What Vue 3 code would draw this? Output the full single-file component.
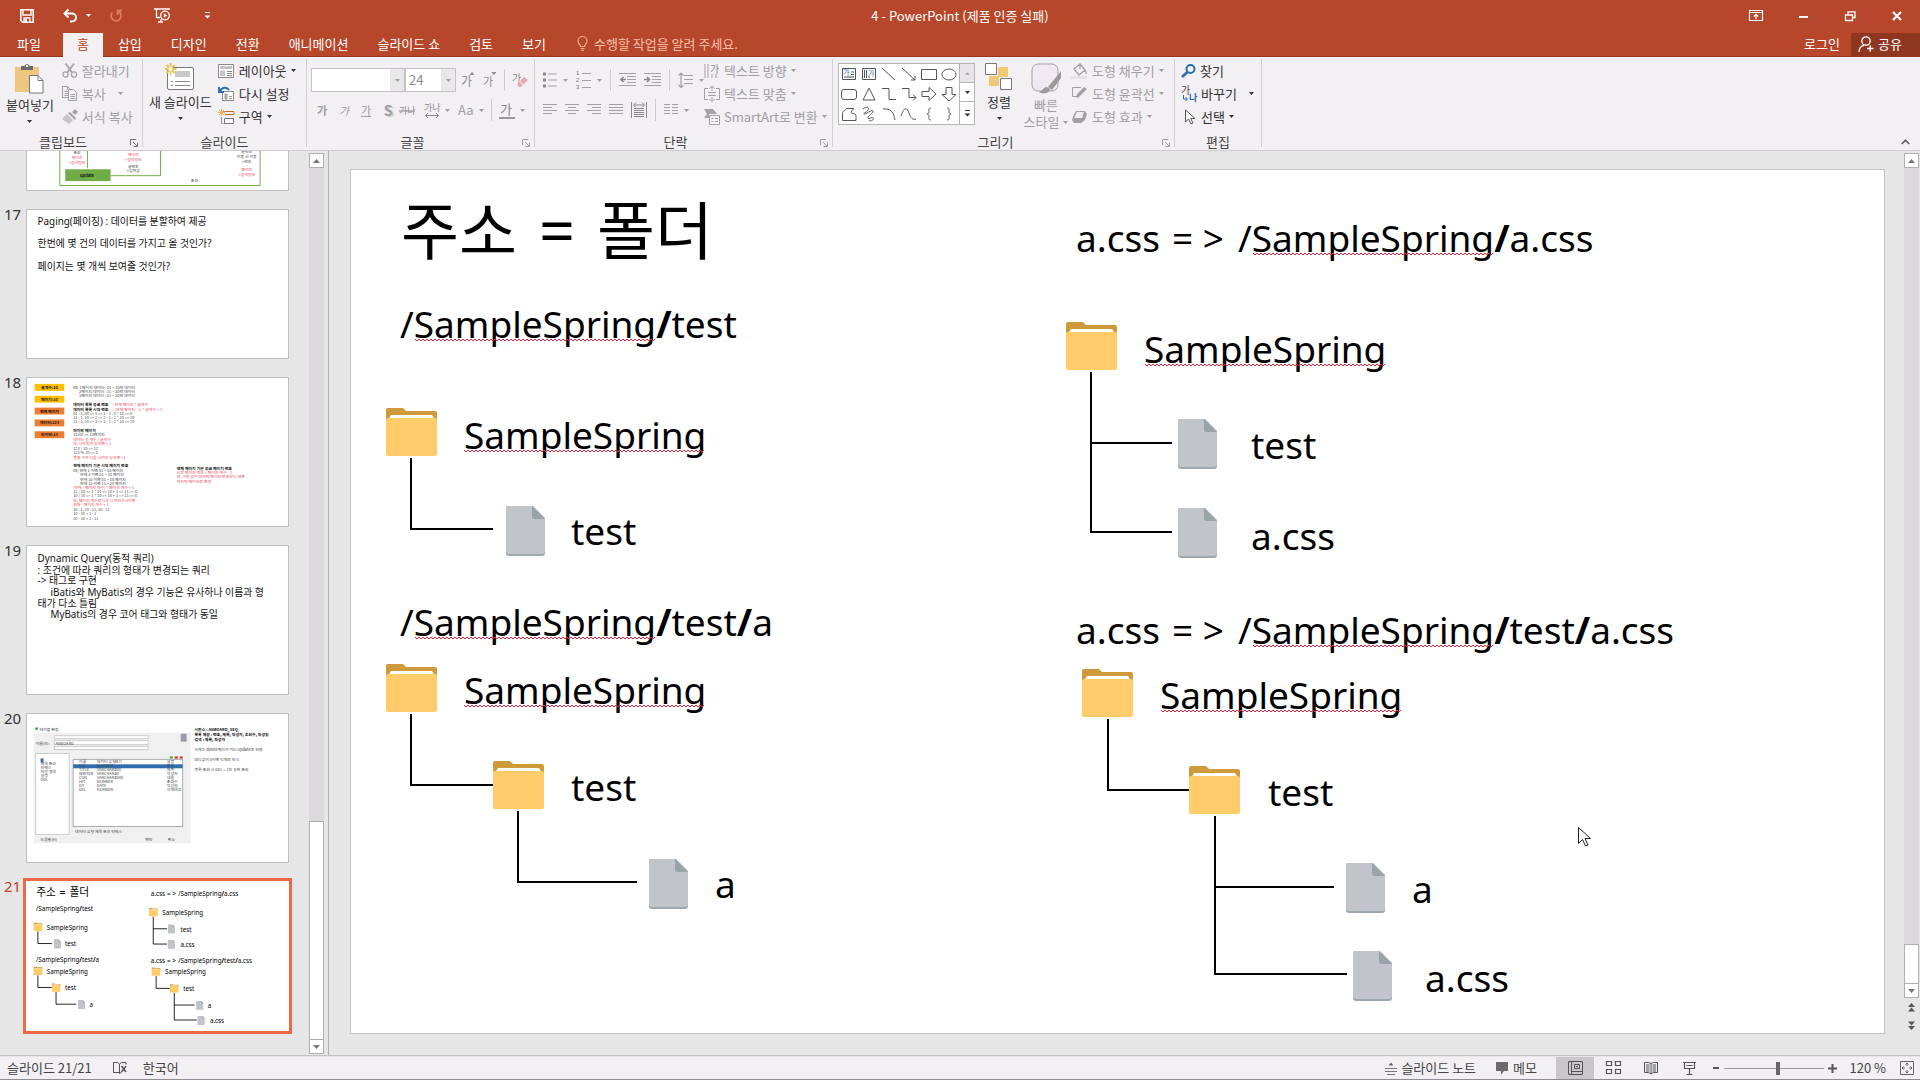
<template>
  <div class="app">
    <header class="top">
      <div class="titlebar">
        <div class="quick">
          <button class="q-btn save" aria-label="저장"><Icon name="save" /></button>
          <button class="q-btn undo" aria-label="실행 취소"><Icon name="undo" /><Icon name="caret" /></button>
          <button class="q-btn redo" aria-label="다시 실행"><Icon name="redo" /></button>
          <button class="q-btn start" aria-label="처음부터 시작"><Icon name="start" /></button>
          <button class="q-btn" aria-label="빠른 실행 도구 모음"><Icon name="more" /></button>
        </div>
        <div class="doc-title">4 - PowerPoint (제품 인증 실패)</div>
        <div class="window-buttons">
          <button aria-label="리본 표시 옵션"><Icon name="ribbonOpt" /></button>
          <button aria-label="최소화"><Icon name="minimize" /></button>
          <button aria-label="이전 크기로"><Icon name="restore" /></button>
          <button aria-label="닫기"><Icon name="close" /></button>
        </div>
      </div>
      <nav class="tabs">
        <button v-for="tab in tabs" :key="tab" class="tab" :class="{ active: tab === activeTab, file: tab === '파일' }" @click="activeTab = tab">{{ tab }}</button>
        <button class="tell-me"><Icon name="bulb" />수행할 작업을 알려 주세요.</button>
        <button class="login">로그인</button>
        <button class="share"><Icon name="person" />공유</button>
      </nav>
    </header>

    <div class="ribbon">
      <!-- 클립보드 -->
      <section class="group clipboard">
        <div class="group-body">
          <button class="big paste"><Icon name="paste" /><span>붙여넣기</span><Icon name="caret" /></button>
          <div class="rows">
            <button class="row off"><Icon name="cut" />잘라내기</button>
            <button class="row off"><Icon name="copy" />복사<Icon name="caret" class="far" /></button>
            <button class="row off"><Icon name="painter" />서식 복사</button>
          </div>
        </div>
        <div class="group-label with-launcher">클립보드<Icon name="launcher" class="launcher" /></div>
      </section>

      <!-- 슬라이드 -->
      <section class="group slides">
        <div class="group-body">
          <button class="big"><Icon name="newSlide" /><span>새 슬라이드</span><Icon name="caret" /></button>
          <div class="rows">
            <button class="row"><Icon name="layout" />레이아웃<Icon name="caret" /></button>
            <button class="row"><Icon name="reset" />다시 설정</button>
            <button class="row"><Icon name="section" />구역<Icon name="caret" /></button>
          </div>
        </div>
        <div class="group-label">슬라이드</div>
      </section>

      <!-- 글꼴 -->
      <section class="group font">
        <div class="group-body stack">
          <div class="tools off">
            <div class="combo name"><input type="text" aria-label="글꼴" /><span class="drop"><Icon name="caret" /></span></div>
            <div class="combo size"><input type="text" aria-label="글꼴 크기" value="24" /><span class="drop"><Icon name="caret" /></span></div>
            <button class="tool grow" aria-label="글꼴 크기 크게"><Icon name="grow" /></button>
            <button class="tool shrink" aria-label="글꼴 크기 작게"><Icon name="shrink" /></button>
            <i class="bar"></i>
            <button class="tool" aria-label="서식 지우기"><Icon name="clear" /></button>
          </div>
          <div class="tools second off">
            <button class="tool fixed bold">가</button>
            <button class="tool fixed italic">가</button>
            <button class="tool fixed under">가</button>
            <button class="tool fixed shadow">S</button>
            <button class="tool" aria-label="취소선"><Icon name="strike" /></button>
            <button class="tool spacing" aria-label="문자 간격"><Icon name="spacing" /><Icon name="caret" /></button>
            <button class="tool case">Aa<Icon name="caret" /></button>
            <i class="bar"></i>
            <button class="tool color" aria-label="글꼴 색"><Icon name="fontColor" /><Icon name="caret" /></button>
          </div>
        </div>
        <div class="group-label with-launcher">글꼴<Icon name="launcher" class="launcher off" /></div>
      </section>

      <!-- 단락 -->
      <section class="group para">
        <div class="group-body">
          <div class="stack">
            <div class="tools off">
              <button class="tool wide" aria-label="글머리 기호"><Icon name="bullets" /><Icon name="caret" /></button>
              <button class="tool wide" aria-label="번호 매기기"><Icon name="numbers" /><Icon name="caret" /></button>
              <i class="bar"></i>
              <button class="tool" aria-label="목록 수준 줄임"><Icon name="outdent" /></button>
              <button class="tool" aria-label="목록 수준 늘림"><Icon name="indent" /></button>
              <i class="bar"></i>
              <button class="tool wide" aria-label="줄 간격"><Icon name="lineSpace" /><Icon name="caret" /></button>
            </div>
            <div class="tools second off">
              <button v-for="a in aligns" :key="a.name" class="tool" :aria-label="a.label"><Icon :name="a.name" /></button>
              <i class="bar"></i>
              <button class="tool wide" aria-label="열"><Icon name="columns" /><Icon name="caret" /></button>
            </div>
          </div>
          <div class="rows">
            <button class="row off"><Icon name="textDir" />텍스트 방향<Icon name="caret" /></button>
            <button class="row off"><Icon name="textFit" />텍스트 맞춤<Icon name="caret" /></button>
            <button class="row off"><Icon name="smartArt" />SmartArt로 변환<Icon name="caret" /></button>
          </div>
        </div>
        <div class="group-label with-launcher">단락<Icon name="launcher" class="launcher off" /></div>
      </section>

      <!-- 그리기 -->
      <section class="group draw">
        <div class="group-body">
          <div class="gallery">
            <div class="shapes">
              <button v-for="(shape, i) in shapes" :key="i" :aria-label="'도형 ' + (i + 1)">
                <svg width="18" height="18" viewBox="0 0 18 18" fill="none" stroke="#555" v-html="shape"></svg>
              </button>
            </div>
            <div class="gallery-nav">
              <button class="dim" aria-label="위로"><Icon name="caretUp" /></button>
              <button aria-label="아래로"><Icon name="caret" /></button>
              <button aria-label="자세히"><Icon name="more" /></button>
            </div>
          </div>
          <button class="big arrange"><Icon name="arrange" /><span>정렬</span><Icon name="caret" /></button>
          <button class="big quick-style off"><Icon name="quickStyle" /><span>빠른</span><span>스타일<Icon name="caret" /></span></button>
          <div class="rows">
            <button class="row off"><Icon name="fill" />도형 채우기<Icon name="caret" /></button>
            <button class="row off"><Icon name="outline" />도형 윤곽선<Icon name="caret" /></button>
            <button class="row off"><Icon name="effect" />도형 효과<Icon name="caret" /></button>
          </div>
        </div>
        <div class="group-label with-launcher">그리기<Icon name="launcher" class="launcher off" /></div>
      </section>

      <!-- 편집 -->
      <section class="group edit">
        <div class="group-body">
          <div class="rows">
            <button class="row"><Icon name="find" />찾기</button>
            <button class="row"><Icon name="replace" />바꾸기<Icon name="caret" class="far" /></button>
            <button class="row"><Icon name="select" />선택<Icon name="caret" /></button>
          </div>
        </div>
        <div class="group-label">편집</div>
      </section>
      <button class="collapse" aria-label="리본 메뉴 축소"><Icon name="chevronUp" /></button>
    </div>

    <main class="workspace">
      <aside class="thumbs">
        <div class="thumb-item">
          <span class="num"></span>
          <svg class="thumb" viewBox="0 0 263 150">
            <g fill="none" stroke="#70ad47" stroke-width="1">
              <path d="M32.500 90V145.500H235.500V90M60.500 90V128M84 135.500H134.500V90" />
            </g>
            <rect x="38" y="129" width="46" height="12" fill="#70ad47" />
            <g class="tiny" text-anchor="middle">
              <text class="bold" x="60" y="137">update</text>
              <text x="50" y="114">조회</text>
              <text x="50" y="119" class="red">페이지</text>
              <text x="50" y="124" class="red">+검색정보</text>
              <text x="107" y="116" class="red">페이지</text>
              <text x="107" y="121" class="red">+검색정보</text>
              <text x="107" y="128">글번호</text>
              <text x="107" y="132">+입력값</text>
              <text x="169" y="142">조회</text>
              <text x="222" y="113">글번호</text>
              <text x="222" y="118">이동 시 이동</text>
              <text x="222" y="123">+번호</text>
              <text x="222" y="131" class="red">페이지</text>
              <text x="222" y="136" class="red">+검색정보</text>
            </g>
          </svg>
        </div>
        <div class="thumb-item">
          <span class="num">17</span>
          <svg class="thumb" viewBox="0 0 263 150">
            <g class="body-text">
              <text x="10" y="15">Paging(페이징) : 데이터를 분할하여 제공</text>
              <text x="10" y="38">한번에 몇 건의 데이터를 가지고 올 것인가?</text>
              <text x="10" y="61">페이지는 몇 개씩 보여줄 것인가?</text>
            </g>
          </svg>
        </div>
        <div class="thumb-item">
          <span class="num">18</span>
          <svg class="thumb" viewBox="0 0 263 150">
            <g v-for="(b, i) in boxes18" :key="b.text">
              <rect x="7" :y="6 + i * 12" width="30" height="7" :fill="b.color" />
              <text class="tiny bold" x="22" :y="11 + i * 12" text-anchor="middle">{{ b.text }}</text>
            </g>
            <text v-for="l in lines18" :key="l.y + l.text" class="tiny" :class="l.kind" :x="l.x || 46" :y="l.y">{{ l.text }}</text>
          </svg>
        </div>
        <div class="thumb-item">
          <span class="num">19</span>
          <svg class="thumb" viewBox="0 0 263 150">
            <g class="body-text">
              <text x="10" y="16">Dynamic Query(동적 쿼리)</text>
              <text x="10" y="28">: 조건에 따라 쿼리의 형태가 변경되는 쿼리</text>
              <text x="10" y="39">-&gt; 태그로 구현</text>
              <text x="23" y="51">iBatis와 MyBatis의 경우 기능은 유사하나 이름과 형</text>
              <text x="10" y="62">태가 다소 틀림</text>
              <text x="23" y="73">MyBatis의 경우 코어 태그와 형태가 동일</text>
            </g>
          </svg>
        </div>
        <div class="thumb-item">
          <span class="num">20</span>
          <svg class="thumb" viewBox="0 0 263 150">
            <rect x="6" y="12" width="159" height="119" fill="#f0f0f0" />
            <rect x="6" y="12" width="159" height="7" fill="#fff" />
            <circle cx="9" cy="15" r="1.500" fill="#3a5" />
            <g fill="#fff" stroke="#ccc" stroke-width="1">
              <rect x="27" y="22" width="95" height="3" />
              <rect x="27" y="27" width="95" height="4" />
              <rect x="27" y="33" width="95" height="3" />
              <rect x="8" y="40" width="34" height="82" />
              <rect x="46" y="46" width="111" height="68" stroke="#aaa" />
            </g>
            <path d="M155 20h6v8h-6z" fill="#99a" />
            <rect x="46" y="51" width="111" height="4" fill="#2f6fae" />
            <rect x="13" y="45" width="3" height="4" fill="#2f6fae" />
            <path d="M149 44h3M154 44h3" stroke="#c22" stroke-width="2" />
            <path d="M144 44h3" stroke="#2a2" stroke-width="2" />
            <g class="tiny">
              <text x="12" y="17">테이블 편집</text>
              <text x="8" y="31">이름(N):</text>
              <text x="28" y="31">ANBOARD</text>
              <text v-for="(t, i) in tree20" :key="t" x="13" :y="52 + i * 4">{{ t }}</text>
              <g v-for="(r, i) in cols20" :key="i">
                <text x="52" :y="50 + i * 4">{{ r[0] }}</text>
                <text x="70" :y="50 + i * 4">{{ r[1] }}</text>
                <text x="88" :y="50 + i * 4">{{ r[2] }}</text>
                <text x="141" :y="50 + i * 4">{{ r[3] }}</text>
              </g>
              <text x="48" y="121">데이터 유형   제약 조건   인덱스</text>
              <text x="13" y="129">도움말(H)</text>
              <text x="119" y="129">확인</text>
              <text x="142" y="129">취소</text>
              <text class="bold" x="169" y="17">시퀀스 : ANBOARD_SEQ</text>
              <text class="bold" x="169" y="22">목록 제공 : 번호, 제목, 작성자, 조회수, 작성일</text>
              <text class="bold" x="169" y="27">검색 : 제목, 작성자</text>
              <text x="169" y="37">삭제는 delete쿼리가 아닌 update로 진행</text>
              <text x="169" y="48">DEL값이 0이면 삭제로 인식</text>
              <text x="169" y="58">목록 조회 시 DEL = 1인 것만 조회</text>
            </g>
          </svg>
        </div>
        <div class="thumb-item current">
          <span class="num">21</span>
          <svg class="thumb" viewBox="-9 -4 1550 873" preserveAspectRatio="none">
            <path class="links heavy" :d="links" />
            <g v-for="(f, i) in folders" :key="'d' + i" :transform="`translate(${f.x} ${f.y})`" v-html="folderArt"></g>
            <g v-for="(f, i) in files" :key="'f' + i" :transform="`translate(${f.x} ${f.y})`" v-html="fileArt"></g>
            <text v-for="(t, i) in labels" :key="'t' + i" class="slide-text" :class="{ head: t.head }" :x="t.x" :y="t.y">
              <tspan v-for="(p, j) in t.parts" :key="j" :class="{ bold: p === '/' && j }">{{ p }}</tspan>
            </text>
          </svg>
        </div>
      </aside>

      <div class="scroll left">
        <button class="scroll-btn" aria-label="위로 스크롤"><Icon name="scrollUp" /></button>
        <div class="track"><div class="handle"></div></div>
        <button class="scroll-btn" aria-label="아래로 스크롤"><Icon name="scrollDown" /></button>
      </div>

      <section class="stage">
        <svg class="slide" viewBox="0 0 1535 865">
          <path class="links" :d="links" />
          <g v-for="(f, i) in folders" :key="'d' + i" :transform="`translate(${f.x} ${f.y})`" v-html="folderArt"></g>
          <g v-for="(f, i) in files" :key="'f' + i" :transform="`translate(${f.x} ${f.y})`" v-html="fileArt"></g>
          <text v-for="(t, i) in labels" :key="'t' + i" class="slide-text" :class="{ head: t.head }" :x="t.x" :y="t.y">
            <tspan v-for="(p, j) in t.parts" :key="j" :class="{ bold: p === '/' && j }">{{ p }}</tspan>
          </text>
          <path class="squiggle" :d="squiggles" />
          <path d="M1228.500 658.500v16l4-4 3 6.500 2.500-1-3-6.500h5.500z" fill="#fff" stroke="#222" />
        </svg>
      </section>

      <div class="scroll right">
        <button class="scroll-btn" aria-label="이전"><Icon name="scrollUp" /></button>
        <div class="track"><div class="handle"></div></div>
        <button class="scroll-btn" aria-label="다음"><Icon name="scrollDown" /></button>
        <button class="jump" aria-label="이전 슬라이드"><Icon name="doubleUp" /></button>
        <button class="jump" aria-label="다음 슬라이드"><Icon name="doubleDown" /></button>
      </div>
    </main>

    <footer class="status">
      <span>슬라이드 21/21</span>
      <button class="spell" aria-label="맞춤법 검사"><Icon name="spell" /></button>
      <button class="lang">한국어</button>
      <button class="notes"><Icon name="notes" />슬라이드 노트</button>
      <button class="memo"><Icon name="memo" />메모</button>
      <button v-for="v in views" :key="v.name" class="view" :class="{ active: v.name === view }" :aria-label="v.label" @click="view = v.name"><Icon :name="v.name" /></button>
      <button class="zoom-btn" aria-label="축소"><Icon name="minus" /></button>
      <input v-model="zoom" class="zoom" type="range" min="0" max="100" aria-label="확대/축소" />
      <button class="zoom-btn" aria-label="확대"><Icon name="plus" /></button>
      <button class="percent">120 %</button>
      <button class="fit" aria-label="창에 맞춤"><Icon name="fit" /></button>
    </footer>
  </div>
</template>

<script setup>
import { ref, h } from 'vue';

const activeTab = ref('홈');
const view = ref('normal');
const zoom = ref(54);

const tabs = ['파일', '홈', '삽입', '디자인', '전환', '애니메이션', '슬라이드 쇼', '검토', '보기'];

const views = [
  { name: 'normal', label: '기본' },
  { name: 'sorter', label: '여러 슬라이드' },
  { name: 'reading', label: '읽기용 보기' },
  { name: 'show', label: '슬라이드 쇼' },
];

const aligns = [
  { name: 'alignLeft', label: '왼쪽 맞춤' },
  { name: 'alignCenter', label: '가운데 맞춤' },
  { name: 'alignRight', label: '오른쪽 맞춤' },
  { name: 'justify', label: '양쪽 맞춤' },
  { name: 'distribute', label: '균등 분할' },
];

const g = '#a3a1a4';
const fontAttr = 'font-family="Noto Sans CJK KR, sans-serif"';

// 아이콘 [너비, 높이, 내용]
const icons = {
  save: [14, 14, '<path d="M.8.8h12.400v12.400H2.500L.8 11.500z" fill="none" stroke="#fff" stroke-width="1.600"/><path d="M3 1v5h8V1M4 13V9h6v4" fill="none" stroke="#fff" stroke-width="1.400"/><path d="M5 10h2v3H5z" fill="#fff"/>'],
  undo: [15, 13, '<path d="M1.500 4.500h7.500a4 4 0 0 1 0 8H7" fill="none" stroke="#fff" stroke-width="2"/><path d="M5.500.5l-4 4 4 4" fill="none" stroke="#fff" stroke-width="2"/>'],
  redo: [14, 13, '<path d="M9.500 2.500a5 5 0 1 1-6 .8M8.500 6V1.500H13" fill="none" stroke="#dd7a62" stroke-width="1.800"/>'],
  start: [17, 15, '<path d="M0 1h16M2.500 1v8.500H6M4 14h5M7 11v3" fill="none" stroke="#fff" stroke-width="1.300"/><circle cx="11" cy="7.500" r="4.300" fill="none" stroke="#fff" stroke-width="1.300"/><path d="M9.800 5.300v4.400l3.400-2.200z" fill="#fff"/>'],
  caret: [5, 3, '<path d="M0 0h5L2.500 3z" fill="currentColor"/>'],
  caretUp: [5, 3, '<path d="M0 3h5L2.500 0z" fill="currentColor"/>'],
  more: [7, 7, '<path d="M1 .5h5" stroke="currentColor"/><path d="M.5 3.500h6L3.500 6.500z" fill="currentColor"/>'],
  ribbonOpt: [14, 11, '<path d="M.5.5h13v10H.5zM.5 2.500h13M7 9V4.500M4.800 6.500L7 4.300l2.200 2.200" fill="none" stroke="#fff" stroke-width="1.200"/>'],
  minimize: [10, 10, '<path d="M0 6h9" stroke="#fff" stroke-width="2"/>'],
  restore: [11, 10, '<path d="M.5 4h7v5.500h-7zM3 3.500V.8h7v5.700H8" fill="none" stroke="#fff" stroke-width="1.300"/>'],
  close: [10, 10, '<path d="M1 1l8 8M9 1L1 9" stroke="#fff" stroke-width="2.200"/>'],
  bulb: [11, 15, '<path d="M3.500 10.500C3.500 8.500 1 8 1 5a4.500 4.500 0 0 1 9 0c0 3-2.500 3.500-2.500 5.500zM3.800 12.500h3.600M4.300 14.300h2.600" fill="none" stroke="#f7a98f" stroke-width="1.200"/>'],
  person: [16, 16, '<circle cx="8" cy="5" r="4.200" fill="none" stroke="#fff" stroke-width="1.300"/><path d="M1 16c0-4 2.500-6 5-6.800M9 12.500h6.500M12.200 9.300v6.500" fill="none" stroke="#fff" stroke-width="1.300"/>'],
  paste: [29, 31, '<path d="M0 4h24v25H0z" fill="#edc77e"/><path d="M6 7V3h3.500a2.600 2.600 0 0 1 5 0H18v4z" fill="#6a6a6a"/><circle cx="12" cy="3" r="1.200" fill="#fff"/><path d="M14.500 12.500H23l5 5v12.500H14.500z" fill="#fff" stroke="#777"/><path d="M23 12.500v5h5" fill="none" stroke="#777"/>'],
  cut: [16, 15, `<path d="M3.500.5l7 9.500M12 .5L5 10" stroke="${g}" stroke-width="1.800"/><circle cx="3.500" cy="11.500" r="2.600" fill="none" stroke="${g}" stroke-width="1.200"/><circle cx="12" cy="11.500" r="2.600" fill="none" stroke="${g}" stroke-width="1.200"/>`],
  copy: [16, 15, `<path d="M.5.5h5l3 3v8h-8zM5.500.5v3h3M2.500 5.500H7M2.500 7.500H7M2.500 9.500H7" fill="none" stroke="${g}"/><path d="M6.500 3.500h5l3 3v8h-8z" fill="#f2f0f3" stroke="${g}"/><path d="M8.500 8.500H13M8.500 10.500H13M8.500 12.500H13" stroke="${g}"/>`],
  painter: [16, 15, `<path d="M10 3l3-3 3 3-3 3zM6 4l2-1 6 6-1 2z" fill="${g}"/><path d="M5 5l6 6-4 4-7-5z" fill="#c7c3c7"/>`],
  launcher: [8, 8, '<path d="M.5 6V.5H6M3 3l4 4M7.500 3.500v4h-4" fill="none" stroke="currentColor"/>'],
  newSlide: [31, 28, '<rect x="2.500" y="4.500" width="26" height="22" rx="1.500" fill="#fff" stroke="#777"/><path d="M10 8h15v6H10z" fill="#c8c8c8"/><path d="M6 18.500h2M10 18.500h15M6 22.500h2M10 22.500h15" stroke="#888"/><path d="M5.500 0v12M0 6h11.500M1.500 2l8 8M9.500 2l-8 8" stroke="#e9c24f" stroke-width="1.800"/><circle cx="5.500" cy="6" r="2" fill="#fff"/>'],
  layout: [17, 14, '<path d="M.5.5h15v13H.5z" fill="#fff" stroke="#888"/><path d="M2 2h12v3H2zM2 6.500h5v5.500H2z" fill="#c4c4c4"/><path d="M9 7.500h5M9 9.500h5M9 11.500h5" stroke="#888"/>'],
  reset: [17, 15, '<path d="M4.500 5.500h11v9h-11z" fill="#fff" stroke="#888"/><path d="M7 8h2v5H7zM11 10.500h3M11 12.500h3" stroke="#999" fill="#bbb"/><path d="M1.500 5.500C4 1 9 .5 11 4M1 1v5h5" fill="none" stroke="#2b6cab" stroke-width="1.900"/>'],
  section: [17, 16, '<path d="M7 2.500h9M7 5.500h9v-3" fill="none" stroke="#c96a1a"/><path d="M6.500 9.500h9v5h-9z" fill="#fff" stroke="#777"/><path d="M3.500 8v6.500h2M5 2.500h2" fill="none" stroke="#999"/><path d="M3.500 0v7M0 3.500h7M1 1l5 5M6 1L1 6" stroke="#e8b95c"/>'],
  grow: [14, 16, `<text x="0" y="14" font-size="12" ${fontAttr} fill="#8c8a8d">가</text><path d="M8.500 3h5L11 0z" fill="#8c8a8d"/>`],
  shrink: [14, 16, `<text x="0" y="14" font-size="11" ${fontAttr} fill="#8c8a8d">가</text><path d="M8.500 0h5L11 3z" fill="#8c8a8d"/>`],
  clear: [17, 16, `<text x="0" y="10" font-size="10" ${fontAttr} fill="#8c8a8d">가</text><path d="M5 12l7-7 4 3-7 7H7z" fill="#e8a9b4"/><path d="M7.500 9.500l4 3.500" stroke="#fff"/>`],
  strike: [17, 12, `<text x="0" y="10" font-size="9" ${fontAttr} fill="#8c8a8d">가나</text><path d="M0 7h16" stroke="#8c8a8d"/>`],
  spacing: [17, 18, `<text x="0" y="10" font-size="9" ${fontAttr} fill="#8c8a8d">가나</text><path d="M1 14.500h14M4 12l-2.500 2.500L4 17M12 12l2.500 2.500L12 17" fill="none" stroke="#8c8a8d"/>`],
  fontColor: [16, 17, `<text x="1" y="12" font-size="13" ${fontAttr} fill="#8c8a8d">가</text><path d="M0 16h16" stroke="#9a979b" stroke-width="2"/>`],
  bullets: [14, 16, `<path d="M5 2h9M5 8h9M5 14h9" stroke="${g}"/><path d="M0 .5h3v3H0zM0 6.500h3v3H0zM0 12.500h3v3H0z" fill="#8a888b"/>`],
  numbers: [15, 20, `<path d="M6 3.500h9M6 10.500h9M6 17.500h9" stroke="${g}"/><g font-size="6" font-family="Liberation Sans, sans-serif" fill="#777"><text x="0" y="5">1</text><text x="0" y="12">2</text><text x="0" y="19">3</text></g>`],
  outdent: [17, 14, `<path d="M0 .5h17M8 3.500h9M8 6.500h9M8 9.500h9M0 12.500h17" stroke="${g}"/><path d="M7 6.500H2M4.500 4L2 6.500 4.500 9" fill="none" stroke="#8a888b" stroke-width="1.700"/>`],
  indent: [17, 14, `<path d="M0 .5h17M8 3.500h9M8 6.500h9M8 9.500h9M0 12.500h17" stroke="${g}"/><path d="M0 6.500h5.500M3 4l2.500 2.500L3 9" fill="none" stroke="#8a888b" stroke-width="1.700"/>`],
  lineSpace: [15, 17, `<path d="M6 3.500h9M6 7.500h9M6 11.500h9M3 1v14M.5 3.500L3 1l2.500 2.500M.5 13L3 15.500 5.500 13" fill="none" stroke="${g}" stroke-width="1.200"/>`],
  alignLeft: [14, 12, `<path d="M0 .5h14M0 3.500h9M0 6.500h14M0 9.500h9" stroke="${g}"/>`],
  alignCenter: [14, 12, `<path d="M0 .5h14M3 3.500h8M0 6.500h14M3 9.500h8" stroke="${g}"/>`],
  alignRight: [14, 12, `<path d="M0 .5h14M5 3.500h9M0 6.500h14M5 9.500h9" stroke="${g}"/>`],
  justify: [14, 12, `<path d="M0 .5h14M0 3.500h14M0 6.500h14M0 9.500h14" stroke="${g}"/>`],
  distribute: [16, 16, '<path d="M.5 0v16M15.500 0v16M3 6.500h10M3 8.500h10M3 10.500h10M3 12.500h10M3 14.500h10M3 3h10M5 .5L2.500 3 5 5.500M11 .5L13.500 3 11 5.500" fill="none" stroke="#8a888b"/>'],
  columns: [14, 12, `<path d="M0 .5h6M0 3.500h6M0 6.500h6M0 9.500h6M8 .5h6M8 3.500h6M8 6.500h6M8 9.500h6" stroke="${g}"/>`],
  textDir: [16, 16, `<path d="M1 1v14M4 1v14M8 11v4M12 11v4" stroke="${g}"/><text x="6" y="10" font-size="10" ${fontAttr} fill="#8a888b">가</text>`],
  textFit: [16, 16, `<path d="M4 2.500H.5v11H4M12 2.500h3.500v11H12M4 6.500h8M4 9.500h8M8 5V0M5.500 2.500L8 0l2.500 2.500M8 11v4.500M5.500 13L8 15.500l2.500-2.500" fill="none" stroke="${g}"/>`],
  smartArt: [16, 16, `<path d="M0 0h9l4 5H5v4H0l3-4z" fill="${g}"/><path d="M5.500 6.500h10v9h-10z" fill="#f7f5f7" stroke="${g}"/><path d="M7.500 9.500h2M11 9.500h3M7.500 12.500h2M11 12.500h3" stroke="${g}"/>`],
  arrange: [28, 28, '<path d="M13 4h10v10H13zM4 13h10v10H4z" fill="#f0c878"/><path d="M.5.5h11v11H.5zM15.500 15.500h11v11h-11z" fill="#fff" stroke="#777"/>'],
  quickStyle: [31, 31, `<rect x="1" y="1" width="26" height="27" rx="6" fill="#efeaf1" stroke="${g}"/><path d="M30 8L17 24l4 3 9-12zM16 24c-4 0-4 4-8 5 4 3 11 1 11-3z" fill="#9c999d"/>`],
  fill: [17, 16, `<path d="M3 6l6-5 5 6-6 5zM9 1v5M14 7l1.500 4" fill="none" stroke="${g}" stroke-width="1.300"/><path d="M0 13h16v3H0z" fill="#e8e2e8"/>`],
  outline: [17, 15, `<path d="M10 1.500H1.500v9H6" fill="none" stroke="${g}"/><path d="M5 12l1-4 7-7 3 2-8 8z" fill="${g}"/>`],
  effect: [17, 14, `<path d="M5 1h9l2 3-2 6-4 3H3L1 10l2-6z" fill="${g}"/><path d="M5.500 1.500h8l-2 7h-9z" fill="#eee" stroke="${g}"/>`],
  find: [15, 14, '<circle cx="9.500" cy="5" r="4" fill="none" stroke="#2b6cab" stroke-width="2"/><path d="M6.500 8L1 13" stroke="#2b6cab" stroke-width="2.600"/>'],
  replace: [16, 17, `<text x="0" y="9" font-size="10" ${fontAttr} fill="#444">가</text><text x="8" y="16" font-size="9" font-weight="700" ${fontAttr} fill="#2b6cab">나</text><path d="M2.500 10v4H6M4.500 12L6.500 14l-2 2" fill="none" stroke="#2b6cab"/>`],
  select: [16, 16, '<path d="M4.500 1v12l3-3 2.500 5 2-1-2.300-4.500H14z" fill="#fff" stroke="#555"/>'],
  chevronUp: [9, 6, '<path d="M.7 5L4.500 1.300 8.300 5" fill="none" stroke="#666" stroke-width="1.700"/>'],
  scrollUp: [7, 4, '<path d="M0 4h7L3.500 0z" fill="#777"/>'],
  scrollDown: [7, 4, '<path d="M0 0h7L3.500 4z" fill="#777"/>'],
  doubleUp: [7, 9, '<path d="M0 4h7L3.500 0zM0 8.500h7L3.500 4.500z" fill="#555"/>'],
  doubleDown: [7, 9, '<path d="M0 .5h7L3.500 4.500zM0 5h7L3.500 9z" fill="#555"/>'],
  spell: [16, 14, '<path d="M7.500 11.500H1.500V1.500h4l2 1.500v9.500l2-1M7.500 3l2-1.500h4.500v2" fill="none" stroke="#555"/><path d="M9.500 5l4.500 6M14 5l-4.500 6" stroke="#555" stroke-width="1.500"/>'],
  notes: [12, 13, '<path d="M3.500 3.500h5L6 .5z" fill="#666"/><path d="M0 6.500h12M0 9.500h12M2 12.500h8" stroke="#777"/>'],
  memo: [12, 13, '<path d="M0 0h12v9H8l-3 4V9H0z" fill="#6b696c"/>'],
  normal: [15, 14, '<path d="M.5.5h14v13H.5zM3.500.5v13M3.500 10.500h11M6.500 3.500h5v4h-5z" fill="none" stroke="#555"/><path d="M8 5.500h2" stroke="#555"/>'],
  sorter: [15, 14, '<path d="M.5.500h5v4h-5zM9.500.500h5v4h-5zM.5 8.500h5v4h-5zM9.500 8.500h5v4h-5z" fill="none" stroke="#555" stroke-width="1.200"/>'],
  reading: [14, 14, '<path d="M.5 1.500h4l2.500 1 2.500-1h4v10h-4l-2.500 1.500-2.500-1.500h-4zM7 2.500V13M2 4h3.500M2 6h3.500M2 8h3.500M2 10h3.500M8.500 4H12M8.500 6H12M8.500 8H12M8.500 10H12" fill="none" stroke="#555"/>'],
  show: [13, 13, '<path d="M0 .5h13M1.500.5v6h10v-6M3.500 3.500h6M6.500 7v5M3.500 12.500h6" fill="none" stroke="#555" stroke-width="1.200"/>'],
  minus: [8, 8, '<path d="M1 4h6" stroke="#555" stroke-width="2"/>'],
  plus: [9, 9, '<path d="M0 4.500h9M4.500 0v9" stroke="#555" stroke-width="2"/>'],
  fit: [14, 14, '<path d="M.5.5h13v13H.5zM7 2v3M5.500 3.500L7 2l1.500 1.500M7 12V9M5.500 10.500L7 12l1.500-1.500M2 7h3M3.500 5.500L2 7l1.500 1.500M12 7H9M10.500 5.500L12 7l-1.500 1.500" fill="none" stroke="#666"/>'],
};

const Icon = ({ name }) => {
  const [width, height, body] = icons[name];
  return h('svg', { width, height, viewBox: `0 0 ${width} ${height}`, overflow: 'visible', innerHTML: body });
};
Icon.props = ['name'];

// 도형 갤러리 (6 x 3)
const shapes = [
  `<path d="M2.500 3.500h13v11h-13zM11 7h3M11 9.500h3M4 12h10"/><text x="3" y="10" font-size="7" ${fontAttr} fill="#2b6cab" stroke="none">가</text>`,
  `<path d="M2.500 3.500h13v11h-13zM4.500 5v8M6.500 5v8M9 11v2"/><text x="8" y="11" font-size="7" ${fontAttr} fill="#2b6cab" stroke="none">가</text>`,
  '<path d="M2 3l13 12"/>',
  '<path d="M2 3l13 12M15 11v4h-4"/>',
  '<path d="M1.500 4.500h15v10h-15z"/>',
  '<ellipse cx="9" cy="9.500" rx="7" ry="5.500"/>',
  '<rect x="1.500" y="4.500" width="15" height="10" rx="2.500"/>',
  '<path d="M9 3l6 12H3z"/>',
  '<path d="M2 3.500h7v11h7"/>',
  '<path d="M2 3.500h7v9h7M13 9.500l3 3-3 3"/>',
  '<path d="M2 6.500h7v-4l7 6.500-7 6.500v-4H2z"/>',
  '<path d="M6 2.500h6v7h4L9 16 2 9.500h4z"/>',
  '<path d="M6.500 3.500h7.500c-4 3-3 5-1 5 2 0 3 1 3 3v4H2.500V9c0-4 3-3 4-5.500z"/>',
  '<path d="M3 4c3-3 7-2 5 1s-5 3-4 4 8-5 9-3-6 5-5 7 4-2 5 0-2 4-4 2"/>',
  '<path d="M3 4c8-1 11 4 12 11"/>',
  '<path d="M1 11C4 2 7 2 9 8s4 7 7 6"/>',
  '<path d="M11 3c-3 0-2 2-2 4 0 1-1 2-2 2 1 0 2 1 2 2 0 2-1 4 2 4"/>',
  '<path d="M7 3c3 0 2 2 2 4 0 1 1 2 2 2-1 0-2 1-2 2 0 2 1 4-2 4"/>',
];

const boxes18 = [
  { text: '글개수:10', color: '#ffc000' },
  { text: '페이지:10', color: '#ffc000' },
  { text: '현재 페이지', color: '#ed7d31' },
  { text: '데이터:123', color: '#ed7d31' },
  { text: '마지막:13', color: '#ed7d31' },
];

const lines18 = [
  { y: 11, text: 'ex) 1페이지 데이터 : 01 ~ 10번 데이터' },
  { y: 15, x: 52, text: '2페이지 데이터 : 11 ~ 20번 데이터' },
  { y: 19, x: 52, text: '3페이지 데이터 : 21 ~ 30번 데이터' },
  { y: 28, kind: 'bold', text: '데이터 목록 종료 번호' },
  { y: 28, x: 86, kind: 'red', text: ': 현재 페이지 * 글개수' },
  { y: 33, kind: 'bold', text: '데이터 목록 시작 번호' },
  { y: 33, x: 86, kind: 'red', text: ': (현재 페이지 - 1) * 글개수 + 1' },
  { y: 37, text: '01 : 1, 00 => 1 => 1 - 1 : 0 * 10 => 0' },
  { y: 42, text: '11 : 1, 10 => 2 => 2 - 1 : 1 * 10 => 10' },
  { y: 46, text: '21 : 1, 20 => 3 => 3 - 1 : 2 * 10 => 20' },
  { y: 55, kind: 'bold', text: '마지막 페이지' },
  { y: 59, text: '123건 => 13페이지' },
  { y: 64, kind: 'red', text: '데이터 총 개수 / 글개수' },
  { y: 68, kind: 'red', text: '단, 나머지가 있으면 + 1' },
  { y: 73, text: '123 / 10 => 12' },
  { y: 77, text: '123 % 10 => 3' },
  { y: 82, kind: 'red', text: '몫을 구한 다음 나머지 있으면 +1' },
  { y: 90, kind: 'bold', text: '현재 페이지 기준 시작 페이지 번호' },
  { y: 95, text: 'ex) 현재 1 이면 01 ~ 10 페이지' },
  { y: 99, x: 53, text: '현재 2 이면 01 ~ 10 페이지' },
  { y: 104, x: 53, text: '현재 10 이면 01 ~ 10 페이지' },
  { y: 108, x: 53, text: '현재 12 이면 11 ~ 20 페이지' },
  { y: 113, kind: 'red', text: '(현재 / 페이지 개수) * 페이지 개수 + 1' },
  { y: 117, text: '12 / 10 => 1 * 10 => 10 + 1 => 11 => O' },
  { y: 121, text: '10 / 10 => 1 * 10 => 10 + 1 => 11 => X' },
  { y: 126, kind: 'red', text: '단, 페이지 개수로 나눈 나머지가 0이면' },
  { y: 130, kind: 'red', text: '현재 - 페이지 개수 + 1' },
  { y: 135, text: '10 : 1, 20 : 11, 30 : 21' },
  { y: 139, text: '10 - 10 + 1 : 1' },
  { y: 144, text: '20 - 10 + 1 : 11' },
  { y: 93, x: 151, kind: 'bold', text: '현재 페이지 기준 종료 페이지 번호' },
  { y: 97, x: 151, kind: 'red', text: '시작 페이지 번호 + 페이지 개수 - 1' },
  { y: 101, x: 151, kind: 'red', text: '단, 구한 값이 마지막 페이지 번호보다 크면' },
  { y: 106, x: 151, kind: 'red', text: '마지막 페이지로 변경' },
];

const tree20 = ['제약 조건', '인덱스', '저장 영역', '설명', 'DDL'];

const cols20 = [
  ['이름', '데이터 유형', '크기', '설명'],
  ['NO', 'NUMBER', '', '번호'],
  ['TITLE', 'VARCHAR2', '300', '제목'],
  ['WRITER', 'VARCHAR2', '30', '작성자'],
  ['CON', 'VARCHAR2', '3000', '내용'],
  ['HIT', 'NUMBER', '', '조회수'],
  ['DT', 'DATE', '', '작성일'],
  ['DEL', 'NUMBER', '', '삭제여부'],
];

// 21번 슬라이드
const labels = [
  { x: 51, y: 85, head: true, parts: ['주소'] },
  { x: 189, y: 85, head: true, parts: ['='] },
  { x: 247, y: 85, head: true, parts: ['폴더'] },
  { x: 50, y: 169, parts: ['/', 'SampleSpring', '/', 'test'] },
  { x: 114, y: 280, parts: ['SampleSpring'] },
  { x: 221, y: 376, parts: ['test'] },
  { x: 50, y: 467, parts: ['/', 'SampleSpring', '/', 'test', '/', 'a'] },
  { x: 114, y: 535, parts: ['SampleSpring'] },
  { x: 221, y: 632, parts: ['test'] },
  { x: 365, y: 729, parts: ['a'] },
  { x: 726, y: 83, parts: ['a.css'] },
  { x: 822, y: 83, parts: ['= >'] },
  { x: 888, y: 83, parts: ['/', 'SampleSpring', '/', 'a.css'] },
  { x: 794, y: 194, parts: ['SampleSpring'] },
  { x: 901, y: 290, parts: ['test'] },
  { x: 901, y: 381, parts: ['a.css'] },
  { x: 726, y: 475, parts: ['a.css'] },
  { x: 822, y: 475, parts: ['= >'] },
  { x: 888, y: 475, parts: ['/', 'SampleSpring', '/', 'test', '/', 'a.css'] },
  { x: 810, y: 540, parts: ['SampleSpring'] },
  { x: 918, y: 637, parts: ['test'] },
  { x: 1062, y: 734, parts: ['a'] },
  { x: 1075, y: 823, parts: ['a.css'] },
];

const folders = [
  { x: 36, y: 239 }, { x: 36, y: 495 }, { x: 143, y: 592 },
  { x: 716, y: 153 }, { x: 732, y: 500 }, { x: 839, y: 597 },
];

const files = [
  { x: 156, y: 337 }, { x: 299, y: 690 }, { x: 828, y: 250 },
  { x: 828, y: 339 }, { x: 996, y: 694 }, { x: 1003, y: 782 },
];

const links = 'M61 289v71h82M61 545v71h82M168 642v71h119M741 203v160h81M741 274h81M758 550v71h81M865 647v158h132M865 718h119';

const folderArt = '<path d="M0 14V2q0-2 2-2h15l3 3h29q2 0 2 2v10z" fill="#cf9b3a"/><path d="M2 12l3-5h41l3 5z" fill="#fff"/><path d="M0 11q1-1 2-1h47q2 0 2 2v34q0 2-2 2H2q-2 0-2-2z" fill="#ffcc69"/>';
const fileArt = '<path d="M0 2q0-2 2-2h25l12 12v35q0 3-3 3H3q-3 0-3-3z" fill="#9ca7ae"/><path d="M0 2q0-2 2-2h24l13 13v32q0 3-3 3H3q-3 0-3-3z" fill="#c1c4c9"/><path d="M26 0l13 13H28q-2 0-2-2z" fill="#9aa3a8"/>';

// 맞춤법 물결선
const wave = (x, y) => {
  let d = `M${x} ${y}`;
  for (let i = 0; i < 60; i++) d += 'l2 2l2 -2';
  return d;
};
const squiggles = [
  [65, 170], [114, 281], [65, 468], [114, 536],
  [903, 84], [795, 195], [903, 476], [811, 541],
].map(([x, y]) => wave(x, y)).join('');
</script>

<style>
body {
  margin: 0;
}
</style>

<style scoped>
.app {
  display: flex;
  flex-direction: column;
  height: 100vh;
  overflow: hidden;
  background: #e6e6e6;
  color: #333;
  font: 13px/16px "Noto Sans CJK KR", sans-serif;
}

button {
  display: flex;
  align-items: center;
  padding: 0;
  border: none;
  background: none;
  color: inherit;
  font: inherit;
  white-space: nowrap;
}

svg {
  flex: none;
}

/* 제목 표시줄 */
.top {
  background: #b7472a;
  color: #fff;
  border-bottom: 1px solid #93361f;
}

.titlebar {
  display: grid;
  grid-template-columns: 1fr auto 1fr;
  align-items: center;
  height: 31px;
  padding-bottom: 2px;
}

.quick {
  display: flex;
  align-items: center;
  padding-left: 20px;
}

.q-btn.save {
  margin-right: 29px;
}

.q-btn.undo {
  gap: 8px;
  margin-right: 18px;
}

.q-btn.redo {
  margin-right: 31px;
}

.q-btn.start {
  margin-right: 33px;
}

.window-buttons {
  display: flex;
  justify-content: flex-end;
  gap: 36px;
  padding-right: 18px;
}

.tabs {
  display: flex;
  height: 23px;
  gap: 1px;
  padding-left: 3px;
}

.tab {
  padding: 0 14px 2px;
}

.tab.file {
  padding-right: 21px;
}

.tab.active {
  height: 24px;
  background: #f2f0f3;
  color: #b7472a;
}

.tell-me {
  gap: 6px;
  margin-left: 16px;
  padding-bottom: 2px;
  color: #f7bda9;
}

.login {
  margin-left: auto;
  padding: 0 10px 2px;
}

.share {
  gap: 4px;
  width: 69px;
  padding: 0 0 2px 7px;
  background: #8f3621;
}

/* 리본 */
.ribbon {
  display: flex;
  height: 93px;
  background: #f2f0f3;
  border-bottom: 1px solid #cdcbce;
}

.group {
  display: flex;
  flex-direction: column;
  box-sizing: border-box;
  flex: none;
  margin: 2px 0 3px;
  border-right: 1px solid #d2d0d3;
}

.group-body {
  display: flex;
  flex: none;
  height: 76px;
}

.group-label {
  position: relative;
  line-height: 14px;
  text-align: center;
  color: #444;
}

.group-label.with-launcher {
  padding-right: 16px;
}

.launcher {
  position: absolute;
  right: 4px;
  top: 4px;
  color: #777;
}

.off,
.launcher.off {
  color: #a19ea2;
}

.big {
  flex-direction: column;
  gap: 1px;
  padding-top: 4px;
  color: #333;
}

.big > svg:first-child {
  margin-bottom: 2px;
}

.big > svg:last-child {
  margin-top: 6px;
}

.big.off {
  color: #a19ea2;
}

.rows {
  display: flex;
  flex-direction: column;
}

.row {
  height: 23px;
  gap: 4px;
}

.row .far {
  margin-left: 8px;
}

.clipboard {
  width: 143px;
}

.clipboard .group-body {
  gap: 8px;
  padding-left: 6px;
}

.slides {
  width: 164px;
}

.slides .group-body {
  gap: 6px;
  padding-left: 6px;
}

.font {
  width: 228px;
}

.stack {
  display: flex;
  flex-direction: column;
}

.font .stack {
  padding-left: 4px;
}

.tools {
  display: flex;
  align-items: center;
  height: 24px;
  margin-top: 9px;
}

.tools.second {
  margin-top: 6px;
}

.bar {
  width: 1px;
  height: 22px;
  margin: 0 7px;
  background: #cfcdd0;
}

.combo {
  display: flex;
  box-sizing: border-box;
  height: 24px;
  border: 1px solid #c3c1c4;
  background: #fff;
}

.combo.name {
  width: 94px;
}

.combo.size {
  width: 51px;
}

.combo input {
  flex: 1;
  min-width: 0;
  padding: 0 3px;
  border: none;
  background: none;
  color: #8c8a8d;
  font: inherit;
}

.drop {
  display: flex;
  align-items: center;
  justify-content: center;
  width: 14px;
  background: #e9e7ea;
}

.tool.grow {
  margin: 0 8px 0 5px;
}

.tool.fixed {
  justify-content: center;
  width: 22px;
  font-size: 11px;
}

.tool.bold {
  font-weight: 700;
}

.tool.italic {
  font-style: italic;
}

.tool.under {
  text-decoration: underline;
}

.tool.fixed.shadow {
  font-size: 14px;
  font-weight: 700;
  text-shadow: 2px 1px 1px #ccc;
}

.tool.spacing {
  gap: 4px;
  margin: 0 8px;
}

.tool.case {
  gap: 5px;
}

.tool.color {
  gap: 5px;
}

.para {
  width: 298px;
}

.para .stack {
  width: 161px;
  padding-left: 8px;
}

.para .tools {
  gap: 8px;
}

.para .tools .bar {
  margin: 0;
}

.para .tool.wide {
  gap: 6px;
}

.draw {
  width: 342px;
}

.draw .group-body {
  padding-left: 5px;
}

.gallery {
  display: flex;
  box-sizing: border-box;
  width: 137px;
  height: 62px;
  margin-top: 4px;
  border: 1px solid #b5b3b6;
  background: #fff;
}

.shapes {
  display: grid;
  flex: 1;
  grid-template-columns: repeat(6, 1fr);
  grid-template-rows: repeat(3, 1fr);
}

.shapes svg {
  overflow: visible;
}

.shapes button {
  justify-content: center;
}

.gallery-nav {
  display: grid;
  width: 14px;
  border-left: 1px solid #b5b3b6;
}

.gallery-nav button {
  justify-content: center;
}

.gallery-nav button + button {
  border-top: 1px solid #b5b3b6;
}

.gallery-nav .dim {
  background: #e6e4e7;
  color: #aaa;
}

.arrange {
  width: 48px;
}

.quick-style {
  width: 46px;
}

.quick-style span svg {
  margin: 0 0 3px 4px;
}

.draw .rows {
  margin-left: 2px;
}

.edit {
  width: 87px;
}

.edit .group-body {
  padding-left: 6px;
}

.collapse {
  align-self: flex-end;
  margin: 0 10px 5px auto;
}

/* 작업 영역 */
.workspace {
  display: flex;
  flex: 1;
  min-height: 0;
  border-bottom: 1px solid #c3c1c4;
}

.thumbs {
  display: flex;
  flex-direction: column;
  justify-content: flex-end;
  gap: 18px;
  width: 309px;
  padding-bottom: 24px;
  overflow: hidden;
  box-sizing: border-box;
}

.thumb-item {
  display: flex;
  flex: none;
}

.num {
  width: 22px;
  padding-left: 4px;
  font: 15px/10px "Noto Sans", sans-serif;
}

.current .num {
  color: #b7472a;
}

.thumb {
  box-sizing: border-box;
  width: 263px;
  height: 150px;
  border: 1px solid #c0c0c0;
  background: #fff;
}

.current .thumb {
  border: none;
  outline: 3px solid #ee6a47;
}

.body-text {
  font: 10px "Noto Sans", "Noto Sans CJK KR", sans-serif;
  fill: #111;
}

.tiny {
  font-size: 4px;
  fill: #444;
}

.tiny.bold,
.tiny .bold {
  font-weight: 700;
  fill: #111;
}

.tiny.red,
.tiny .red {
  fill: #e8485a;
}

.scroll {
  display: flex;
  flex-direction: column;
  flex: none;
  width: 15px;
  padding-top: 2px;
}

.scroll.left {
  padding: 2px 4px 1px 0;
  border-right: 1px solid #b3b1b4;
}

.scroll-btn {
  box-sizing: border-box;
  flex: none;
  justify-content: center;
  height: 15px;
  border: 1px solid #b0aeb1;
  background: #fff;
}

.track {
  display: flex;
  flex: 1;
  flex-direction: column;
  justify-content: flex-end;
  background: #dbd9dc;
}

.handle {
  box-sizing: border-box;
  border: 1px solid #b0aeb1;
  border-bottom: none;
  background: #fff;
  height: 25%;
}

.scroll.right {
  padding-right: 1px;
  padding-bottom: 21px;
}

.right .handle {
  height: 39px;
}

.jump {
  justify-content: center;
  height: 18px;
}

.stage {
  flex: 1;
  display: flex;
  min-width: 0;
  padding: 18px 19px 21px 21px;
}

.slide {
  flex: 1;
  min-width: 0;
  width: 100%;
  outline: 1px solid #c4c4c4;
  outline-offset: -1px;
  background: #fff;
}

.links {
  fill: none;
  stroke: #000;
  stroke-width: 2;
}

.links.heavy {
  stroke-width: 5;
}

.slide-text {
  font: 37px "Noto Sans", "Noto Sans CJK KR", sans-serif;
  fill: #000;
}

.slide-text.head {
  font-size: 63px;
}

.slide-text .bold {
  font-weight: 700;
}

.squiggle {
  fill: none;
  stroke: #e3263a;
  stroke-width: 1;
}

/* 상태 표시줄 */
.status {
  display: flex;
  flex: none;
  height: 22px;
  align-items: center;
  margin-top: 1px;
  padding-left: 7px;
  background: #f2f0f3;
  border-bottom: 1px solid #8f8b92;
  color: #444;
}

.spell {
  margin: 0 15px 0 20px;
}

.notes {
  gap: 4px;
  margin-left: auto;
}

.memo {
  gap: 5px;
  margin: 0 19px 0 20px;
}

.view {
  justify-content: center;
  width: 38px;
  height: 22px;
}

.view.active {
  background: #c9c7ca;
}

.zoom-btn {
  justify-content: center;
  width: 16px;
}

.zoom {
  appearance: none;
  width: 100px;
  height: 16px;
  margin: 0;
  background: linear-gradient(#999, #999) center / 100% 1px no-repeat;
}

.zoom::-webkit-slider-thumb {
  appearance: none;
  width: 4px;
  height: 13px;
  background: #666;
}

.percent {
  justify-content: flex-end;
  width: 46px;
}

.fit {
  margin: 0 6px 0 14px;
}
</style>
